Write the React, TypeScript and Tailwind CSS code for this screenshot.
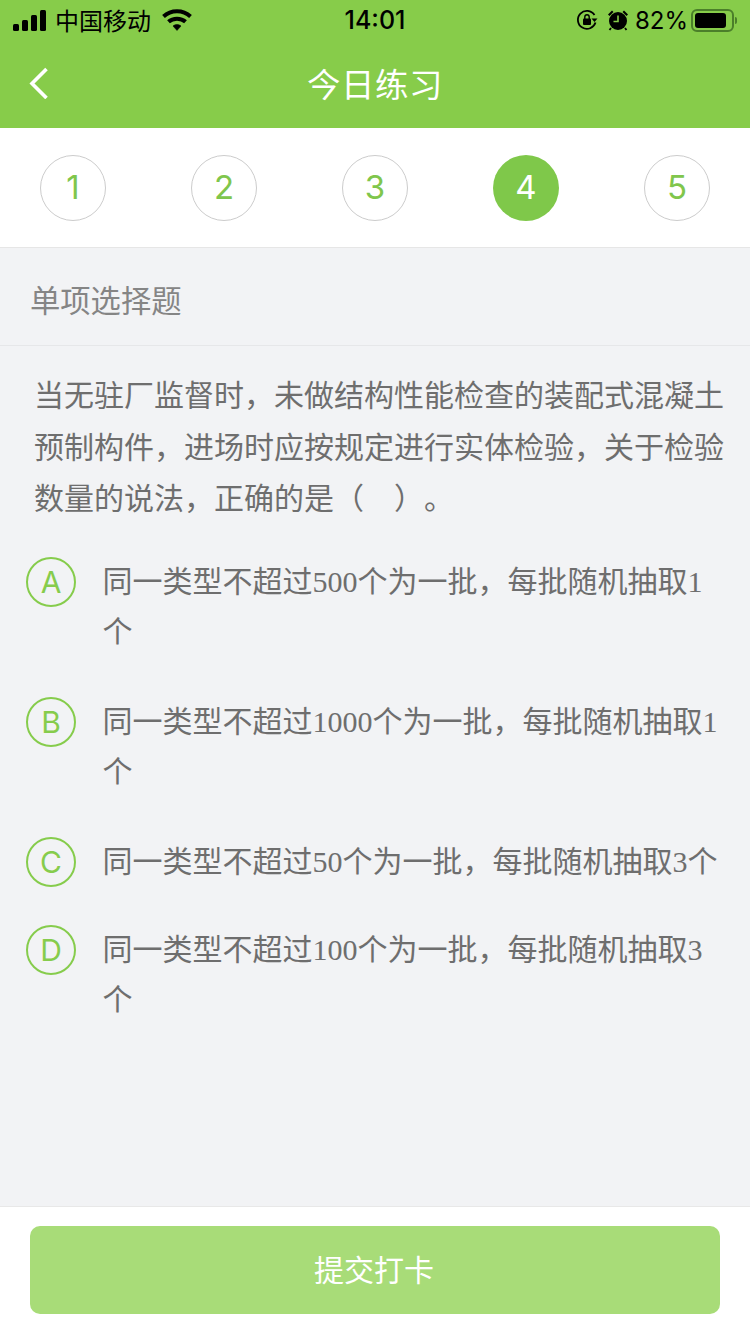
import React from "react";

const cjk = { fontFamily: '"Noto Sans CJK SC", sans-serif' };

const steps = [1, 2, 3, 4, 5];

const options = [
  { key: "A", text: "同一类型不超过500个为一批，每批随机抽取1个", gap: "mb-[40px]" },
  { key: "B", text: "同一类型不超过1000个为一批，每批随机抽取1个", gap: "mb-[40px]" },
  { key: "C", text: "同一类型不超过50个为一批，每批随机抽取3个", gap: "mb-[38px]" },
  { key: "D", text: "同一类型不超过100个为一批，每批随机抽取3个", gap: "" },
];

const StatusBar = () => (
  <div className="flex h-[40px] items-center justify-between pl-[13px] pr-[13px] text-black">
    <div className="flex w-[250px] items-center">
      <svg width="34" height="21" viewBox="0 0 34 21" fill="currentColor">
        <rect x="0" y="14" width="6" height="7" rx="1.5" />
        <rect x="9" y="10" width="6" height="11" rx="1.5" />
        <rect x="18" y="5" width="6" height="16" rx="1.5" />
        <rect x="27" y="0" width="6" height="21" rx="1.5" />
      </svg>
      <span className="ml-[8px] text-[24px] leading-none" style={cjk}>中国移动</span>
      <svg className="ml-[11px]" width="30" height="22" viewBox="0 0 30 22" fill="none" stroke="currentColor" strokeWidth="4">
        <path d="M1.5 7.5C9 0.5 21 0.5 28.5 7.5" />
        <path d="M6.5 12.8C11 8.6 19 8.6 23.5 12.8" />
        <path d="M11 17L15 21.5L19 17C17 15 13 15 11 17Z" fill="currentColor" strokeWidth="0.5" />
      </svg>
    </div>
    <span className="pt-[1px] text-[25px] font-medium leading-none font-['Inter',sans-serif]">14:01</span>
    <div className="flex w-[250px] items-center justify-end">
      <svg width="22" height="22" viewBox="0 0 22 22" fill="none" stroke="currentColor" strokeWidth="1.8">
        <path d="M19.5 13.5A9 9 0 1 1 18.5 6" />
        <path d="M21.5 9.5L18.5 13L15.5 9.5Z" fill="currentColor" strokeWidth="0" />
        <rect x="7" y="9.5" width="8" height="6.5" rx="1" fill="currentColor" strokeWidth="0" />
        <path d="M8.8 10V8a2.2 2.2 0 0 1 4.4 0v2" strokeWidth="1.4" />
      </svg>
      <svg className="ml-[9px]" width="22" height="22" viewBox="0 0 22 22" fill="currentColor">
        <circle cx="11" cy="12" r="9" />
        <path d="M1 5.5L5 1.5L6.5 3L2.5 7ZM21 5.5L17 1.5L15.5 3L19.5 7Z" />
        <path d="M11 6.5V12.5H6.5" fill="none" stroke="#87cc4a" strokeWidth="1.6" />
        <path d="M4 19L2.5 21M18 19L19.5 21" stroke="currentColor" strokeWidth="1.8" />
      </svg>
      <span className="ml-[6px] pt-[1px] text-[24px] leading-none font-['Inter',sans-serif]">82%</span>
      <div className="ml-[3px] flex items-center">
        <div className="flex h-[23px] w-[43px] items-center rounded-[6px] border-2 border-[#4b7f2a] p-[2px]">
          <div className="h-full w-[31px] rounded-[3px] bg-black" />
        </div>
        <div className="ml-[1px] h-[7px] w-[2px] rounded-r-full bg-[#4b7f2a]" />
      </div>
    </div>
  </div>
);

export default function App() {
  return (
    <div className="flex h-[1334px] w-[750px] flex-col overflow-hidden bg-[#f2f3f5]" style={cjk}>
      <header className="h-[128px] shrink-0 bg-[#87cc4a]">
        <StatusBar />
        <div className="relative flex h-[88px] items-center justify-center pb-[3px]">
          <svg className="absolute left-[28px] top-[27px]" width="22" height="32" viewBox="0 0 22 32" fill="none" stroke="white" strokeWidth="3.6">
            <path d="M18.5 2L4 16.5L18.5 31" />
          </svg>
          <h1 className="text-[33.5px] font-normal leading-none tracking-[0.5px] text-white">今日练习</h1>
        </div>
      </header>

      <div className="flex h-[120px] shrink-0 items-center justify-between border-b border-[#e6e6e6] bg-white px-[40px] pt-[1px]">
        {steps.map((n) => (
          <div
            key={n}
            className={
              n === 4
                ? "flex h-[66px] w-[66px] items-center justify-center rounded-full bg-[#7fc84a] text-[33px] text-white font-['Inter',sans-serif]"
                : "flex h-[66px] w-[66px] items-center justify-center rounded-full border border-[#cccccc] text-[33px] text-[#80c64c] font-['Inter',sans-serif]"
            }
          >
            {n}
          </div>
        ))}
      </div>

      <div className="flex h-[98px] shrink-0 items-center border-b border-[#e6e7e9] pl-[30px] pt-[6px] text-[30.3px] text-[#858585]">
        单项选择题
      </div>

      <p className="mt-[22px] shrink-0 pl-[34px] pr-[25px] text-[30px] leading-[51.5px] text-[#6e6e6e] [text-spacing-trim:space-all]">
        当无驻厂监督时，未做结构性能检查的装配式混凝土预制构件，进场时应按规定进行实体检验，关于检验数量的说法，正确的是（　）。
      </p>

      <div className="mt-[34px] flex-1 pl-[26px] pr-[30px]">
        {options.map((o) => (
          <div key={o.key} className={`flex items-start ${o.gap}`}>
            <div className="flex h-[50px] w-[50px] shrink-0 items-center justify-center rounded-full border-2 border-[#86cc4c] text-[30px] leading-none text-[#86cc4c] font-['Inter',sans-serif]">
              {o.key}
            </div>
            <p
              className="ml-[26.5px] text-[30px] leading-[50px] text-[#6e6e6e]"
              style={{ fontFamily: '"Liberation Serif", "Noto Sans CJK SC", serif' }}
            >
              {o.text}
            </p>
          </div>
        ))}
      </div>

      <footer className="flex h-[128px] shrink-0 border-t border-[#e8e8e8] bg-white px-[30px] pt-[19px]">
        <button className="h-[88px] w-full rounded-[10px] bg-[#a8dc78] pb-[3px] pr-[2px] text-[30px] text-white">提交打卡</button>
      </footer>
    </div>
  );
}
